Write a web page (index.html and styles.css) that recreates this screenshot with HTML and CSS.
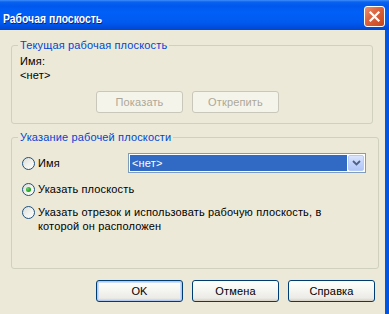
FILE: index.html
```html
<!DOCTYPE html>
<html lang="ru">
<head>
    <meta charset="UTF-8">
    <title>Рабочая плоскость</title>
    <link rel="stylesheet" href="styles.css">
</head>
<body>
    <div class="window">
        <div class="titlebar">
            <span class="title">Рабочая плоскость</span>
            <span class="close-btn">
                <svg width="13" height="13" viewBox="0 0 13 13">
                    <path d="M2.5 2.5 L10.5 10.5 M10.5 2.5 L2.5 10.5" stroke="#fff" stroke-width="2.2" stroke-linecap="square"/>
                </svg>
            </span>
        </div>
        <div class="content">
            <div class="group group-current">
                <span class="group-title">Текущая рабочая плоскость</span>
                <div class="line first">Имя:</div>
                <div class="line">&lt;нет&gt;</div>
                <div class="button-row inner">
                    <span class="btn disabled">Показать</span>
                    <span class="btn disabled">Открепить</span>
                </div>
            </div>

            <div class="group group-choice">
                <span class="group-title">Указание рабочей плоскости</span>
                <div class="option option-name">
                    <span class="radio"></span>
                    <span class="option-label">Имя</span>
                    <span class="combo">
                        <span class="combo-value">&lt;нет&gt;</span>
                        <span class="combo-arrow">
                            <svg width="9" height="6" viewBox="0 0 9 6">
                                <path d="M1 1 L4.5 4.5 L8 1" stroke="#4D6185" stroke-width="1.8" fill="none"/>
                            </svg>
                        </span>
                    </span>
                </div>
                <div class="option">
                    <span class="radio checked"></span>
                    <span class="option-label">Указать плоскость</span>
                </div>
                <div class="option option-multi">
                    <span class="radio"></span>
                    <span class="option-label">Указать отрезок и использовать рабочую плоскость, в<br>которой он расположен</span>
                </div>
            </div>

            <div class="button-row dialog">
                <span class="btn default">OK</span>
                <span class="btn">Отмена</span>
                <span class="btn">Справка</span>
            </div>
        </div>
    </div>
</body>
</html>
```

FILE: styles.css
```css
body {
    margin: 0;
    background: #ECE9D8;
    font-family: "Liberation Sans", Arial, sans-serif;
    font-size: 11px;
    letter-spacing: 0.15px;
    color: #000;
}
.window {
    width: 389px;
    height: 314px;
    overflow: hidden;
}
.titlebar {
    height: 30px;
    display: flex;
    align-items: center;
    justify-content: space-between;
    padding: 0 4px 0 3px;
    box-sizing: border-box;
    background: linear-gradient(#3D8DF9 0, #0A62EE 2px, #0058EE 6px, #0060F8 40%, #005AF0 75%, #0046D2 100%);
}
.title {
    display: inline-block;
    color: #fff;
    font-weight: bold;
    font-size: 13px;
    letter-spacing: 0;
    padding-top: 7px;
    transform: scaleX(0.8);
    transform-origin: left center;
    text-shadow: 1px 1px 0 #0A1E8A;
}
.close-btn {
    width: 19px;
    height: 19px;
    margin-top: 2px;
    border: 1px solid #fff;
    border-radius: 3px;
    background: linear-gradient(135deg, #E9906F 0, #DC6540 40%, #C94419 100%);
    display: flex;
    align-items: center;
    justify-content: center;
}
.content {
    height: 284px;
    padding-left: 11px;
    border-right: 4px solid #0055E5;
    box-sizing: border-box;
    overflow: hidden;
}
.group {
    border: 1px solid #D0D0BF;
    border-radius: 3px;
    box-sizing: border-box;
    display: flex;
    flex-direction: column;
    align-items: flex-start;
}
.group-current {
    width: 362px;
    margin-top: 15px;
    height: 79px;
}
.group-choice {
    width: 368px;
    margin-top: 13px;
    height: 132px;
}
.group-title {
    margin: -7px 0 0 6px;
    padding: 0 2px;
    line-height: 13px;
    background: #ECE9D8;
    color: #0046D5;
}
.line {
    line-height: 14px;
    padding-left: 8px;
}
.line.first {
    margin-top: 2px;
}
.button-row {
    display: flex;
    gap: 9px;
}
.button-row.inner {
    margin: 9px 0 0 84px;
}
.button-row.dialog {
    margin: 11px 0 0 85px;
}
.btn {
    width: 87px;
    height: 22px;
    box-sizing: border-box;
    border: 1px solid #003C74;
    border-radius: 3px;
    font-weight: normal;
    background: linear-gradient(#FFFFFF 0, #F4F4F0 50%, #ECEBE6 85%, #D6D0C5 100%);
    display: flex;
    align-items: center;
    justify-content: center;
}
.btn.default {
    box-shadow: inset 0 0 0 1px #B2CAF1, inset 0 0 0 2px #CEDDF7;
}
.btn.disabled {
    border-color: #C9C7BA;
    background: #F5F4EA;
    color: #ACA899;
}
.option {
    display: flex;
    align-items: center;
    margin: 9px 0 0 10px;
    line-height: 14px;
}
.option-name {
    margin-top: 9px;
    height: 20px;
}
.option-multi {
    align-items: flex-start;
}
.option-multi .radio {
    margin-top: 1px;
}
.radio {
    width: 13px;
    height: 13px;
    box-sizing: border-box;
    border: 1px solid #1C5180;
    border-radius: 50%;
    background: linear-gradient(135deg, #DCDCD7 0, #F2F2EE 55%, #FFFFFF 100%);
    margin-right: 3px;
    flex: none;
    display: flex;
    align-items: center;
    justify-content: center;
}
.radio.checked::after {
    content: "";
    width: 5px;
    height: 5px;
    border-radius: 50%;
    background: radial-gradient(circle at 35% 35%, #6CD46C 0, #21A121 60%, #1A8A1A 100%);
}
.option-label {
    white-space: nowrap;
}
.option-name .option-label {
    width: 90px;
}
.combo {
    width: 238px;
    height: 20px;
    box-sizing: border-box;
    border: 1px solid #7F9DB9;
    padding: 1px;
    background: #fff;
    display: flex;
}
.combo-value {
    flex: 1;
    background: #316AC5;
    color: #fff;
    padding-left: 2px;
    display: flex;
    align-items: center;
}
.combo-arrow {
    width: 16px;
    margin-left: 1px;
    box-sizing: border-box;
    border: 1px solid #B6CBF5;
    border-radius: 2px;
    background: linear-gradient(#DCE6FD 0, #C1D3FB 50%, #B1C6F8 100%);
    display: flex;
    align-items: center;
    justify-content: center;
}
```
